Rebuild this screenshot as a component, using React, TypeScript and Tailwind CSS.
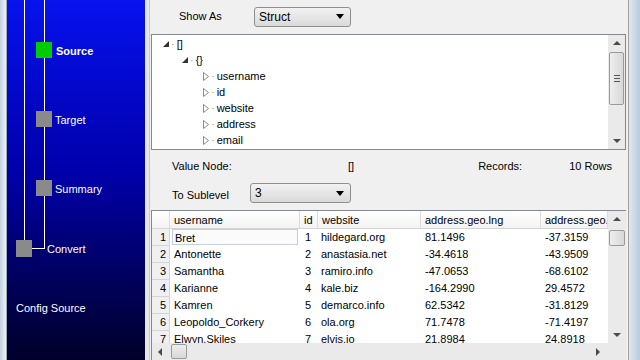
import React from 'react';

const font = { fontFamily: '"Liberation Sans", Arial, sans-serif' };

const rows = [
  ['1', 'Bret', '1', 'hildegard.org', '81.1496', '-37.3159'],
  ['2', 'Antonette', '2', 'anastasia.net', '-34.4618', '-43.9509'],
  ['3', 'Samantha', '3', 'ramiro.info', '-47.0653', '-68.6102'],
  ['4', 'Karianne', '4', 'kale.biz', '-164.2990', '29.4572'],
  ['5', 'Kamren', '5', 'demarco.info', '62.5342', '-31.8129'],
  ['6', 'Leopoldo_Corkery', '6', 'ola.org', '71.7478', '-71.4197'],
  ['7', 'Elwyn.Skiles', '7', 'elvis.io', '21.8984', '24.8918'],
];

function Arrow({ dir, className = '' }: { dir: 'up' | 'down' | 'left' | 'right'; className?: string }) {
  const pts = {
    up: '0,5 4,1 8,5',
    down: '0,1 4,5 8,1',
    left: '5,0 1,4 5,8',
    right: '1,0 5,4 1,8',
  }[dir];
  const vert = dir === 'up' || dir === 'down';
  return (
    <svg width={vert ? 8 : 6} height={vert ? 6 : 8} className={className}>
      <polygon points={pts} fill="#4a4a4a" />
    </svg>
  );
}

function Select({ value, width }: { value: string; width: string }) {
  return (
    <div
      className={`flex h-[20px] ${width} items-center justify-between rounded-[3px] border border-[#8e8f8f] bg-gradient-to-b from-[#f2f2f2] to-[#dadada] pl-[4px] pr-[6px] text-[12px] text-black`}
    >
      <span>{value}</span>
      <svg width="8" height="5">
        <polygon points="0,0 8,0 4,5" fill="#000" />
      </svg>
    </div>
  );
}

function Sidebar() {
  return (
    <div className="relative h-full w-[138px] shrink-0 bg-gradient-to-b from-[#0712ee] via-[#0000a6] to-[#00002a] text-white">
      <div className="absolute left-[17px] top-0 h-[240px] w-px bg-white" />
      <div className="absolute left-[37px] top-0 h-[249px] w-px bg-white" />
      <div className="absolute left-[25px] top-[248px] h-px w-[13px] bg-white" />

      <div className="absolute left-[29px] top-[42px] h-[16px] w-[16px] bg-[#00cc00]" />
      <span className="absolute left-[49px] top-[43px] text-[11px] font-bold">Source</span>

      <div className="absolute left-[29px] top-[111px] h-[16px] w-[16px] bg-[#8a8a8a]" />
      <span className="absolute left-[48px] top-[112px] text-[11px]">Target</span>

      <div className="absolute left-[29px] top-[180px] h-[16px] w-[16px] bg-[#8a8a8a]" />
      <span className="absolute left-[48px] top-[181px] text-[11px]">Summary</span>

      <div className="absolute left-[9px] top-[240px] h-[17px] w-[16px] bg-[#8a8a8a]" />
      <span className="absolute left-[40px] top-[241px] text-[11px]">Convert</span>

      <span className="absolute left-[9px] top-[300px] text-[11px]">Config Source</span>
    </div>
  );
}

function VScroll({ thumbTop, thumbH, grip }: { thumbTop: number; thumbH: number; grip?: boolean }) {
  return (
    <div className="relative flex h-full w-[17px] shrink-0 flex-col items-center justify-between bg-[#eaeaea] py-[5px]">
      <Arrow dir="up" />
      <div
        className="absolute left-[1px] flex w-[15px] flex-col items-center justify-center gap-[2px] rounded-[2px] border border-[#9a9a9a] bg-gradient-to-r from-[#eeeeee] to-[#d8d8d8]"
        style={{ top: thumbTop, height: thumbH }}
      >
        {grip && (
          <>
            <div className="h-px w-[6px] bg-[#555]" />
            <div className="h-px w-[6px] bg-[#555]" />
            <div className="h-px w-[6px] bg-[#555]" />
          </>
        )}
      </div>
      <Arrow dir="down" />
    </div>
  );
}

function TreeRow({ indent, open, label }: { indent: string; open: boolean; label: string }) {
  return (
    <div className={`flex h-[16px] items-center ${indent} text-[11px] text-black`}>
      {open ? (
        <svg width="6" height="6">
          <polygon points="6,0 6,6 0,6" fill="#333" />
        </svg>
      ) : (
        <svg width="6" height="9">
          <polygon points="0.5,0.5 5.5,4.5 0.5,8.5" fill="none" stroke="#8a8a8a" />
        </svg>
      )}
      <span className="ml-[2px] text-[#999]">·</span>
      <span className="ml-[2px]">{label}</span>
    </div>
  );
}

function Tree() {
  return (
    <div className="flex h-[116px] border border-[#828790] bg-white">
      <div className="flex-1 pt-px">
        <TreeRow indent="pl-[11px]" open label="[]" />
        <TreeRow indent="pl-[30px]" open label="{}" />
        <TreeRow indent="pl-[51px]" open={false} label="username" />
        <TreeRow indent="pl-[51px]" open={false} label="id" />
        <TreeRow indent="pl-[51px]" open={false} label="website" />
        <TreeRow indent="pl-[51px]" open={false} label="address" />
        <TreeRow indent="pl-[51px]" open={false} label="email" />
      </div>
      <VScroll thumbTop={17} thumbH={53} grip />
    </div>
  );
}

const widths = ['w-[18px]', 'w-[130px]', 'w-[18px]', 'w-[103px]', 'w-[120px]', 'w-[67px]'];

function Table() {
  return (
    <div className="flex h-[150px] flex-col border-t border-l border-[#828790] bg-white">
      <div className="flex min-h-0 flex-1">
        <div className="flex-1 overflow-hidden">
          <div className="flex h-[18px] border-b border-[#d5d5d5] bg-gradient-to-b from-white to-[#f3f3f3] text-[11px] text-black">
            {['', 'username', 'id', 'website', 'address.geo.lng', 'address.geo.'].map((h, i) => (
              <div key={i} className={`${widths[i]} shrink-0 overflow-hidden whitespace-nowrap border-r border-[#dcdcdc] pl-[4px] leading-[18px]`}>
                {h}
              </div>
            ))}
          </div>
          {rows.map((r) => (
            <div key={r[0]} className="flex h-[17px] text-[11px] text-black">
              <div className="w-[18px] shrink-0 border-r border-b border-[#d5d5d5] bg-[#f0f0f0] pr-[3px] text-right leading-[17px]">
                {r[0]}
              </div>
              <div className="w-[130px] shrink-0 px-[2px]">
                <div className={`h-[16px] pl-[2px] leading-[16px] ${r[0] === '1' ? 'border border-[#c8d0dc] bg-[#fbfbfb] pl-[1px] leading-[14px]' : ''}`}>
                  {r[1]}
                </div>
              </div>
              <div className="w-[18px] shrink-0 pl-[5px] leading-[17px]">{r[2]}</div>
              <div className="w-[103px] shrink-0 pl-[3px] leading-[17px]">{r[3]}</div>
              <div className="w-[120px] shrink-0 pl-[4px] leading-[17px]">{r[4]}</div>
              <div className="w-[67px] shrink-0 pl-[4px] leading-[17px]">{r[5]}</div>
            </div>
          ))}
        </div>
        <div className="relative flex w-[18px] shrink-0 flex-col items-center justify-between bg-[#eaeaea] pt-[5px] pb-[5px]">
          <Arrow dir="up" />
          <div className="absolute left-[1px] top-[19px] h-[16px] w-[16px] rounded-[2px] border border-[#9a9a9a] bg-gradient-to-r from-[#eeeeee] to-[#d8d8d8]" />
          <Arrow dir="down" />
        </div>
      </div>
      <div className="relative flex h-[17px] items-center justify-between bg-[#eaeaea] px-[5px]">
        <Arrow dir="left" />
        <div className="absolute left-[19px] top-[1px] h-[15px] w-[16px] rounded-[2px] border border-[#9a9a9a] bg-gradient-to-b from-[#eeeeee] to-[#d8d8d8]" />
        <div className="mr-[20px]">
          <Arrow dir="right" />
        </div>
      </div>
    </div>
  );
}

export default function App() {
  return (
    <div className="flex h-[360px] w-[640px] overflow-hidden bg-[#f0f0f0]" style={font}>
      <div className="h-full w-[7px] shrink-0 border-r border-[#9aa8b8] bg-gradient-to-r from-[#c4d0de] to-[#eef2f6]" />
      <Sidebar />
      <div className="h-full w-[5px] shrink-0 border-r border-[#c8c8c8] bg-[#e6e6e6]" />
      <div className="flex h-full w-[478px] shrink-0 flex-col pl-[1px] pr-[2px]">
        <div className="flex h-[34px] items-center pb-[1px]">
          <span className="ml-[28px] w-[75px] text-[11px] text-black">Show As</span>
          <Select value="Struct" width="w-[97px]" />
        </div>
        <Tree />
        <div className="flex h-[60px] flex-col text-[11px] text-black">
          <div className="flex h-[32px] items-center pt-[1px]">
            <span className="ml-[21px] w-[176px]">Value Node:</span>
            <span>[]</span>
            <span className="ml-[124px]">Records:</span>
            <span className="ml-[47px]">10 Rows</span>
          </div>
          <div className="flex h-[22px] items-center">
            <span className="ml-[21px] w-[78px] pt-[4px]">To Sublevel</span>
            <Select value="3" width="w-[101px]" />
          </div>
        </div>
        <Table />
      </div>
      <div className="h-full flex-1 border-l border-[#a0a0a0] bg-gradient-to-r from-[#e2e8ef] to-[#b8cade]" />
    </div>
  );
}
